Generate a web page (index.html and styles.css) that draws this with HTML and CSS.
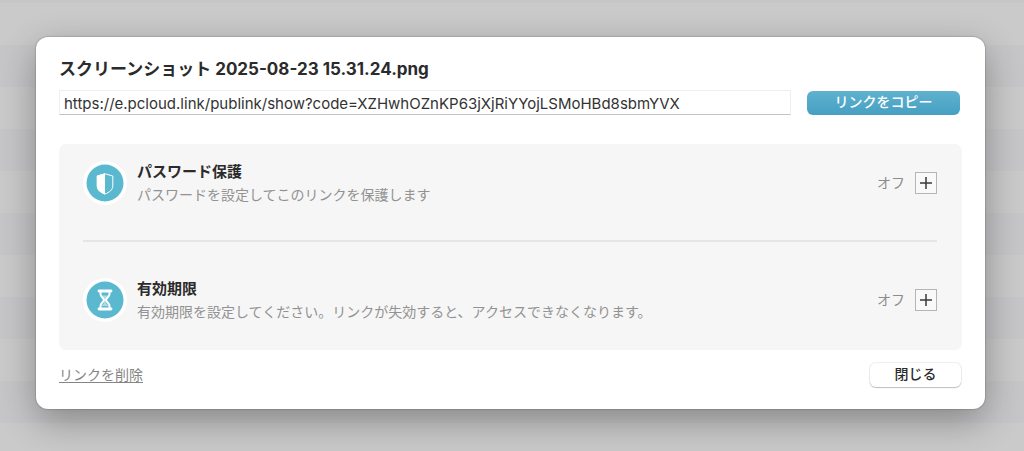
FILE: index.html
```html
<!DOCTYPE html>
<html lang="ja">
<head>
<meta charset="utf-8">
<meta name="viewport" content="width=device-width, initial-scale=1">
<title>共有リンク</title>
<link rel="stylesheet" href="styles.css">
</head>
<body class="desktop">
<main class="dialog">
  <h1 class="file-name"><label for="share-url">スクリーンショット 2025-08-23 15.31.24.png</label></h1>
  <div class="link-row">
    <input class="link-input" id="share-url" type="text" readonly value="https://e.pcloud.link/publink/show?code=XZHwhOZnKP63jXjRiYYojLSMoHBd8sbmYVX">
    <button class="button button-primary" type="button">リンクをコピー</button>
  </div>
  <div class="options">
    <section class="option">
      <svg class="option-icon" viewBox="0 0 44 44" aria-hidden="true">
        <circle cx="22" cy="22" r="22" fill="#fff"/>
        <circle cx="22" cy="22" r="18.5" fill="#5bb9cf"/>
        <path d="M22 12.800 L29.800 15 V25 C29.800 29 26 31.500 22 33 C18 31.500 14.300 29 14.300 25 V15 Z" fill="none" stroke="#fff" stroke-width="1"/>
        <path d="M22 12.300 L13.800 14.700 V25 C13.800 29.500 18 32 22 33.500 Z" fill="#fff"/>
      </svg>
      <div class="option-text">
        <h2 class="option-title">パスワード保護</h2>
        <p class="option-note">パスワードを設定してこのリンクを保護します</p>
      </div>
      <span class="option-state">オフ</span>
      <button class="add-button" type="button" aria-label="パスワード保護を追加">
        <svg class="plus" viewBox="0 0 14 14" aria-hidden="true"><path d="M7 1 V13 M1 7 H13" stroke="#3a3a3a" stroke-width="1.500"/></svg>
      </button>
    </section>
    <section class="option">
      <svg class="option-icon" viewBox="0 0 44 44" aria-hidden="true">
        <circle cx="22" cy="22" r="22" fill="#fff"/>
        <circle cx="22" cy="22" r="18.500" fill="#5bb9cf"/>
        <g fill="none" stroke="#fff" stroke-width="2" stroke-linejoin="round" stroke-linecap="round">
          <path d="M16 13 H28 M16 31 H28" stroke-width="2.800"/>
          <path d="M17.500 13 V16 C17.500 19 21 20.300 21 22 C21 23.700 17.500 25 17.500 28 V31 M26.500 13 V16 C26.500 19 23 20.300 23 22 C23 23.700 26.500 25 26.500 28 V31"/>
        </g>
        <path d="M18.500 17.500 H25.500 L22.800 21 V25 L25.500 28 H18.500 L21.200 25 V21 Z" fill="#fff" fill-opacity=".5"/>
      </svg>
      <div class="option-text">
        <h2 class="option-title">有効期限</h2>
        <p class="option-note">有効期限を設定してください。リンクが失効すると、アクセスできなくなります。</p>
      </div>
      <span class="option-state">オフ</span>
      <button class="add-button" type="button" aria-label="有効期限を追加">
        <svg class="plus" viewBox="0 0 14 14" aria-hidden="true"><path d="M7 1 V13 M1 7 H13" stroke="#3a3a3a" stroke-width="1.500"/></svg>
      </button>
    </section>
  </div>
  <footer class="dialog-footer">
    <a class="delete-link" href="#">リンクを削除</a>
    <button class="button button-plain" type="button">閉じる</button>
  </footer>
</main>
</body>
</html>
```
FILE: styles.css
```css
* {
  box-sizing: border-box;
}

.desktop {
  margin: 0;
  min-height: 100vh;
  padding: 37px 39px 42px 36px;
  background: repeating-linear-gradient(#c6c6c8 0 3px, #cacaca 3px 45px, #c6c6c8 45px 84px);
  font-family: Inter, "Noto Sans CJK JP", sans-serif;
  font-size: 14px;
  line-height: 20px;
  color: #2b2b2b;
}

.dialog {
  padding: 20px 23px 22px;
  border-radius: 12px;
  background: #fff;
  box-shadow: 0 0 1px 1px rgba(0, 0, 0, 0.12), 0 12px 36px rgba(0, 0, 0, 0.32);
}

.file-name {
  margin: 0;
  font-size: 17px;
  font-weight: 700;
  line-height: 24px;
}

.link-row {
  display: flex;
  align-items: center;
  gap: 16px;
  margin: 9px 2px 29px 0;
}

.link-input {
  flex: 1;
  min-width: 0;
  height: 25px;
  padding: 1px 4px 0;
  border: 1px solid #efefef;
  border-bottom-color: #c4c4c4;
  background: #fff;
  font: 15px/20px Inter, "Noto Sans CJK JP", sans-serif;
  color: #333;
}

.button {
  height: 24px;
  padding: 0 0 2px;
  border: 0;
  border-radius: 6px;
  font: 500 14px/20px Inter, "Noto Sans CJK JP", sans-serif;
}

.button-primary {
  width: 153px;
  background: linear-gradient(#5fb2cf, #469fc2);
  color: #fff;
}

.options {
  padding: 0 25px 0 24px;
  border-radius: 7px;
  background: #f6f6f6;
}

.option {
  display: flex;
  align-items: center;
  height: 96px;
  padding-bottom: 18px;
}

.option + .option {
  height: 110px;
  padding: 8px 0 0;
  border-top: 2px solid #e5e5e5;
}

.option-icon {
  width: 44px;
  height: 44px;
}

.option-text {
  flex: 1;
  padding: 2px 0 0 10px;
}

.option-title {
  margin: 0;
  font-size: 15px;
  font-weight: 700;
  line-height: 22px;
}

.option-note {
  margin: 0;
  line-height: 24px;
  color: #929292;
}

.option-state {
  margin-right: 10px;
  color: #8c8c8c;
}

.add-button {
  display: grid;
  place-items: center;
  width: 22px;
  height: 22px;
  padding: 0;
  border: 1px solid #b5b5b5;
  background: #f9f9f9;
}

.plus {
  width: 14px;
  height: 14px;
}

.dialog-footer {
  display: flex;
  align-items: center;
  justify-content: space-between;
  padding: 13px 1px 0 0;
}

.delete-link {
  color: #858585;
  text-underline-offset: 2px;
}

.button-plain {
  width: 91px;
  background: #fff;
  box-shadow: 0 0 1px 1px rgba(0, 0, 0, 0.07), 0 1px 1px rgba(0, 0, 0, 0.2);
  color: #2b2b2b;
}
```
